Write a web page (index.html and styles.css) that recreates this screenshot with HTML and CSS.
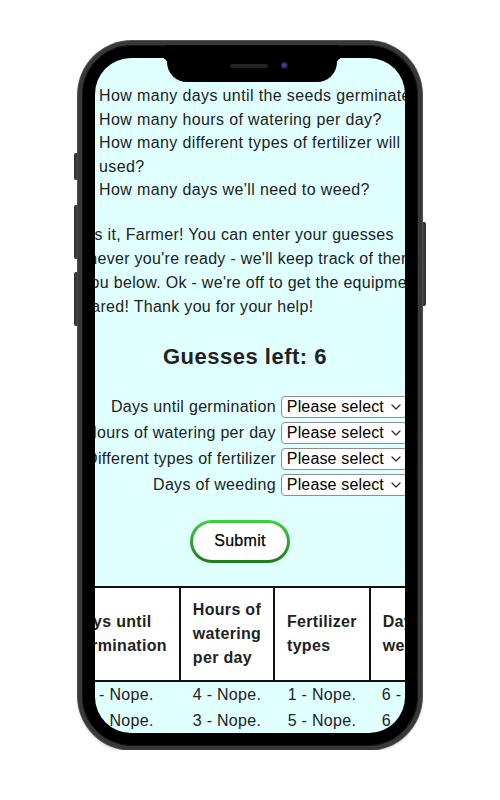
FILE: index.html
```html
<!DOCTYPE html>
<html lang="en">
<head>
<meta charset="utf-8">
<title>Farm Guessing Game</title>
<link rel="stylesheet" href="styles.css">
</head>
<body>
<div class="phone">
  <span class="side-btn mute"></span>
  <span class="side-btn vol-up"></span>
  <span class="side-btn vol-down"></span>
  <span class="side-btn power"></span>
  <div class="screen">
    <div class="page">
      <ul class="questions">
        <li>How many days until the seeds germinate?</li>
        <li>How many hours of watering per day?</li>
        <li>How many different types of fertilizer will be used?</li>
        <li>How many days we'll need to weed?</li>
      </ul>
      <p class="intro">That's it, Farmer! You can enter your guesses whenever you're ready - we'll keep track of them for you below. Ok - we're off to get the equipment prepared! Thank you for your help!</p>
      <h2 class="guesses">Guesses left: 6</h2>
      <form class="guess-form">
        <label class="label" for="g1">Days until germination</label>
        <span class="field"><select id="g1"><option>Please select</option></select><svg class="chev" width="10" height="6" viewBox="0 0 10 6"><path d="M1 1l4 4 4-4" fill="none" stroke="#333" stroke-width="1.3" stroke-linecap="round" stroke-linejoin="round"/></svg></span>
        <label class="label" for="g2">Hours of watering per day</label>
        <span class="field"><select id="g2"><option>Please select</option></select><svg class="chev" width="10" height="6" viewBox="0 0 10 6"><path d="M1 1l4 4 4-4" fill="none" stroke="#333" stroke-width="1.3" stroke-linecap="round" stroke-linejoin="round"/></svg></span>
        <label class="label" for="g3">Different types of fertilizer</label>
        <span class="field"><select id="g3"><option>Please select</option></select><svg class="chev" width="10" height="6" viewBox="0 0 10 6"><path d="M1 1l4 4 4-4" fill="none" stroke="#333" stroke-width="1.3" stroke-linecap="round" stroke-linejoin="round"/></svg></span>
        <label class="label" for="g4">Days of weeding</label>
        <span class="field"><select id="g4"><option>Please select</option></select><svg class="chev" width="10" height="6" viewBox="0 0 10 6"><path d="M1 1l4 4 4-4" fill="none" stroke="#333" stroke-width="1.3" stroke-linecap="round" stroke-linejoin="round"/></svg></span>
      </form>
      <div class="actions"><button class="submit" type="button">Submit</button></div>
      <table class="history">
        <thead>
          <tr><th>Days until germination</th><th>Hours of watering per day</th><th>Fertilizer types</th><th>Days of weeding</th></tr>
        </thead>
        <tbody>
          <tr><td>3 - Nope.</td><td>4 - Nope.</td><td>1 - Nope.</td><td>6 - Correct!</td></tr>
          <tr><td>5 - Nope.</td><td>3 - Nope.</td><td>5 - Nope.</td><td>6 - Correct!</td></tr>
        </tbody>
      </table>
    </div>
  </div>
  <div class="notch"><span class="speaker"></span><span class="camera"></span></div>
</div>
</body>
</html>
```
FILE: styles.css
```css
body {
  margin: 0;
  background: #fff;
  font-family: "Liberation Sans", Arial, sans-serif;
}

.phone {
  position: relative;
  box-sizing: border-box;
  width: 344px;
  height: 709px;
  margin: 41px auto 0;
  padding: 13px;
  border: 4px solid #38383a;
  border-radius: 54px;
  background: #000;
  box-shadow: inset 0 0 0 1px #161617, 0 0 0 1px #55555a, 0 2px 3px rgba(0, 0, 0, 0.2);
}

.side-btn {
  position: absolute;
  width: 4px;
  background: linear-gradient(90deg, #2a2a2c, #4a4a4d);
  border-radius: 2px 0 0 2px;
}
.mute { left: -8px; top: 108px; height: 27px; }
.vol-up { left: -8px; top: 160px; height: 54px; }
.vol-down { left: -8px; top: 227px; height: 54px; }
.power {
  right: -8px;
  top: 177px;
  height: 84px;
  border-radius: 0 2px 2px 0;
  background: linear-gradient(90deg, #4a4a4d, #2a2a2c);
}

.notch {
  position: absolute;
  top: 0;
  left: 85px;
  width: 170px;
  height: 37px;
  background: #000;
  border-radius: 0 0 20px 20px;
}
.notch::before,
.notch::after {
  content: "";
  position: absolute;
  top: 13px;
  width: 6px;
  height: 6px;
}
.notch::before {
  left: -6px;
  background: radial-gradient(circle at 0 100%, transparent 6px, #000 6.5px);
}
.notch::after {
  right: -6px;
  background: radial-gradient(circle at 100% 100%, transparent 6px, #000 6.5px);
}
.speaker {
  position: absolute;
  left: 63px;
  top: 19px;
  width: 38px;
  height: 4px;
  border-radius: 2px;
  background: #232325;
}
.camera {
  position: absolute;
  left: 114px;
  top: 17px;
  width: 7px;
  height: 7px;
  border-radius: 50%;
  background: radial-gradient(circle at 45% 45%, #4b5fa8 0, #23285a 45%, #0e0e16 100%);
}

.screen {
  height: 100%;
  border-radius: 36px;
  overflow: hidden;
  background: #e0ffff;
  color: #222;
}

.page {
  width: 374px;
  margin-left: -37px;
  padding-top: 26px;
  font-size: 16px;
  letter-spacing: 0.3px;
}

.questions {
  margin: 0;
  padding-left: 41px;
  line-height: 23.5px;
  letter-spacing: 0.38px;
}

.intro {
  margin: 21px 0 0;
  line-height: 24px;
}

.guesses {
  margin: 25px 0 0;
  font-size: 22px;
  line-height: 26px;
  font-weight: 700;
  letter-spacing: 0.5px;
  text-align: center;
}

.guess-form {
  display: grid;
  grid-template-columns: auto 126px;
  justify-content: center;
  column-gap: 5px;
  row-gap: 4px;
  margin-top: 26px;
  padding-left: 2px;
}

.label {
  align-self: center;
  text-align: right;
  line-height: 22px;
  white-space: nowrap;
}

.field {
  position: relative;
  display: block;
  height: 22px;
}

.field select {
  appearance: none;
  -webkit-appearance: none;
  display: block;
  box-sizing: border-box;
  width: 100%;
  height: 22px;
  margin: 0;
  padding: 0 18px 0 5px;
  border: 1px solid #8e8e8e;
  border-radius: 4px;
  background: #fff;
  color: #000;
  font: 16px "Liberation Sans", Arial, sans-serif;
  letter-spacing: 0.15px;
}

.chev {
  position: absolute;
  right: 6px;
  top: 8px;
}

.actions {
  display: flex;
  justify-content: center;
  padding-right: 10px;
  margin-top: 24px;
}

.submit {
  box-sizing: border-box;
  width: 100px;
  height: 43px;
  border: 3px solid transparent;
  border-radius: 22px;
  background: linear-gradient(#fff, #fff) padding-box, linear-gradient(#3fd03f, #1f7a1f) border-box;
  color: #000;
  font: 16px "Liberation Sans", Arial, sans-serif;
  letter-spacing: 0.3px;
  -webkit-text-stroke: 0.25px #000;
}

.history {
  width: 100%;
  margin-top: 23px;
  border-collapse: collapse;
  line-height: 24px;
}

.history th {
  padding: 10px 12px;
  border: 2px solid #111;
  background: #fff;
  font-weight: 700;
  text-align: left;
  vertical-align: middle;
}

.history td {
  padding: 1px 12px;
  text-align: center;
  white-space: nowrap;
}
```
